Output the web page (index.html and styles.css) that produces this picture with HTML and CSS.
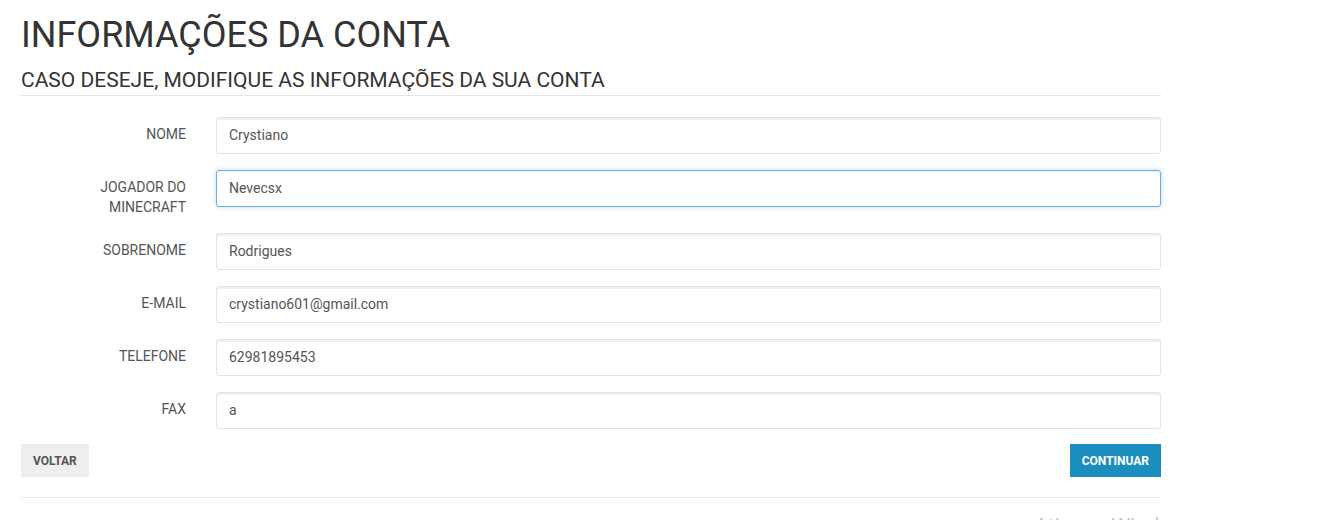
FILE: index.html
```html
<!DOCTYPE html>
<html lang="pt">
<head>
<meta charset="utf-8">
<title>Informações da conta</title>
<link rel="stylesheet" href="styles.css">
</head>
<body>
<div class="container">
  <h1 class="title">INFORMAÇÕES DA CONTA</h1>
  <h2 class="subtitle">CASO DESEJE, MODIFIQUE AS INFORMAÇÕES DA SUA CONTA</h2>
  <form class="form">
    <div class="form-row">
      <label class="form-label">NOME</label>
      <div class="form-field"><input class="input" type="text" value="Crystiano"></div>
    </div>
    <div class="form-row">
      <label class="form-label">JOGADOR DO MINECRAFT</label>
      <div class="form-field"><input class="input input-focus" type="text" value="Nevecsx"></div>
    </div>
    <div class="form-row">
      <label class="form-label">SOBRENOME</label>
      <div class="form-field"><input class="input" type="text" value="Rodrigues"></div>
    </div>
    <div class="form-row">
      <label class="form-label">E-MAIL</label>
      <div class="form-field"><input class="input" type="text" value="crystiano601@gmail.com"></div>
    </div>
    <div class="form-row">
      <label class="form-label">TELEFONE</label>
      <div class="form-field"><input class="input" type="text" value="62981895453"></div>
    </div>
    <div class="form-row">
      <label class="form-label">FAX</label>
      <div class="form-field"><input class="input" type="text" value="a"></div>
    </div>
    <div class="actions">
      <button type="button" class="btn btn-default">VOLTAR</button>
      <button type="button" class="btn btn-primary">CONTINUAR</button>
    </div>
  </form>
  <hr class="divider">
  <div class="watermark">Ativar o Windows</div>
</div>
</body>
</html>
```
FILE: styles.css
```css
* { box-sizing: border-box; }
html, body { margin: 0; padding: 0; background: #fff; }
body {
  font-family: Roboto, "Liberation Sans", sans-serif;
  color: #333;
  font-size: 14px;
  overflow: hidden;
  height: 520px;
}
.container {
  width: 1140px;
  margin-left: 21px;
  position: relative;
}
.title {
  margin: 0;
  padding-top: 13px;
  font-size: 36px;
  font-weight: 400;
  line-height: 44px;
  color: #333;
}
.subtitle {
  margin: 0;
  margin-top: 11px;
  font-size: 21px;
  font-weight: 400;
  line-height: 24px;
  color: #333;
  padding-bottom: 3px;
  border-bottom: 1px solid #e5e5e5;
}
.form { margin-top: 21px; }
.form-row {
  display: grid;
  grid-template-columns: 165px 1fr;
  column-gap: 30px;
  margin-bottom: 16px;
}
.form-label {
  text-align: right;
  font-size: 14px;
  line-height: 20px;
  color: #555;
  padding-top: 7px;
  padding-left: 50px;
}
.input {
  display: block;
  width: 100%;
  height: 37px;
  border: 1px solid #e3e3e3;
  border-radius: 3px;
  box-shadow: inset 0 2px 0 rgba(0,0,0,0.06);
  padding: 5px 12px 7px;
  font-family: Roboto, "Liberation Sans", sans-serif;
  font-size: 14px;
  color: #555;
  background: #fff;
  outline: none;
}
.input-focus {
  border-color: #66afe9;
  box-shadow: inset 0 1px 1px rgba(0,0,0,0.05), 0 0 5px rgba(102,175,233,0.45);
}
.actions {
  display: flex;
  justify-content: space-between;
  margin-top: -1px;
}
.btn {
  height: 33px;
  border: none;
  border-radius: 0;
  padding: 0 12px;
  font-family: Roboto, "Liberation Sans", sans-serif;
  font-size: 12px;
  font-weight: 700;
  cursor: pointer;
}
.btn-default { background: #eeeeee; color: #555; }
.btn-primary { background: #1a8fbf; color: #fff; }
.divider {
  margin: 20px 0 0;
  border: 0;
  border-top: 1px solid #eaeaea;
}
.watermark {
  position: absolute;
  left: 1014px;
  top: 511px;
  font-family: "Segoe UI", "Open Sans", sans-serif;
  font-size: 20px;
  color: rgba(150,150,150,0.6);
  white-space: nowrap;
}
```
